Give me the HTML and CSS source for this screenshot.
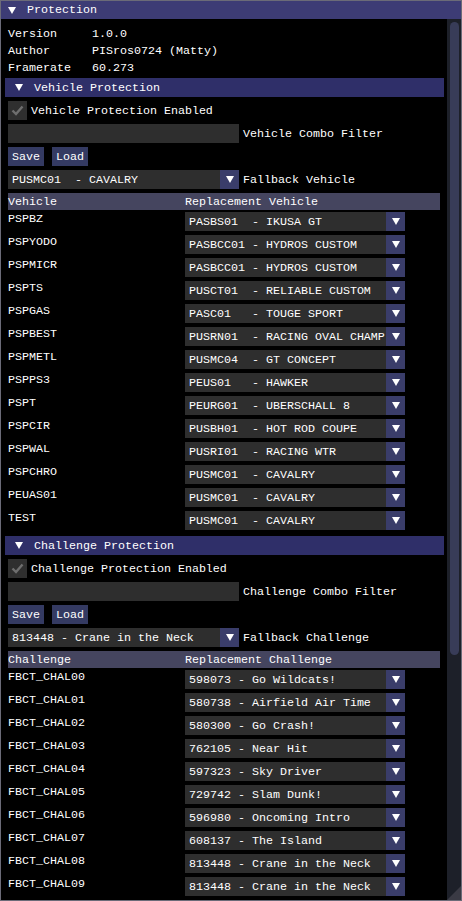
FILE: index.html
```html
<!DOCTYPE html>
<html>
<head>
<meta charset="utf-8">
<link rel="stylesheet" href="styles.css">
</head>
<body>
<div class="window">
  <div class="titlebar"><span class="tri"></span><span class="title">Protection</span></div>
  <div class="body">
    <div class="content">
      <div class="info"><span>Version</span><span>1.0.0</span></div>
      <div class="info"><span>Author</span><span>PISros0724 (Matty)</span></div>
      <div class="info"><span>Framerate</span><span>60.273</span></div>

      <div class="header"><span class="tri"></span><span>Vehicle Protection</span></div>
      <div class="check-row"><span class="checkbox"><svg width="13" height="11" viewBox="0 0 13 11"><path d="M1.5 5.5 L5 9 L11.5 1.5" fill="none" stroke="#6e6e6e" stroke-width="2.4"/></svg></span><span class="text">Vehicle Protection Enabled</span></div>
      <div class="field-row"><span class="input"></span><span class="label">Vehicle Combo Filter</span></div>
      <div class="btn-row"><span class="btn">Save</span><span class="btn">Load</span></div>
      <div class="field-row"><span class="combo wide"><span class="val">PUSMC01  - CAVALRY</span><span class="arrow"><span class="down"></span></span></span><span class="label">Fallback Vehicle</span></div>
      <div class="table">
        <div class="thead"><span>Vehicle</span><span>Replacement Vehicle</span></div>
        <div class="trow"><span class="cell">PSPBZ</span><span class="combo"><span class="val">PASBS01  - IKUSA GT</span><span class="arrow"><span class="down"></span></span></span></div>
        <div class="trow"><span class="cell">PSPYODO</span><span class="combo"><span class="val">PASBCC01 - HYDROS CUSTOM</span><span class="arrow"><span class="down"></span></span></span></div>
        <div class="trow"><span class="cell">PSPMICR</span><span class="combo"><span class="val">PASBCC01 - HYDROS CUSTOM</span><span class="arrow"><span class="down"></span></span></span></div>
        <div class="trow"><span class="cell">PSPTS</span><span class="combo"><span class="val">PUSCT01  - RELIABLE CUSTOM</span><span class="arrow"><span class="down"></span></span></span></div>
        <div class="trow"><span class="cell">PSPGAS</span><span class="combo"><span class="val">PASC01   - TOUGE SPORT</span><span class="arrow"><span class="down"></span></span></span></div>
        <div class="trow"><span class="cell">PSPBEST</span><span class="combo"><span class="val">PUSRN01  - RACING OVAL CHAMP</span><span class="arrow"><span class="down"></span></span></span></div>
        <div class="trow"><span class="cell">PSPMETL</span><span class="combo"><span class="val">PUSMC04  - GT CONCEPT</span><span class="arrow"><span class="down"></span></span></span></div>
        <div class="trow"><span class="cell">PSPPS3</span><span class="combo"><span class="val">PEUS01   - HAWKER</span><span class="arrow"><span class="down"></span></span></span></div>
        <div class="trow"><span class="cell">PSPT</span><span class="combo"><span class="val">PEURG01  - UBERSCHALL 8</span><span class="arrow"><span class="down"></span></span></span></div>
        <div class="trow"><span class="cell">PSPCIR</span><span class="combo"><span class="val">PUSBH01  - HOT ROD COUPE</span><span class="arrow"><span class="down"></span></span></span></div>
        <div class="trow"><span class="cell">PSPWAL</span><span class="combo"><span class="val">PUSRI01  - RACING WTR</span><span class="arrow"><span class="down"></span></span></span></div>
        <div class="trow"><span class="cell">PSPCHRO</span><span class="combo"><span class="val">PUSMC01  - CAVALRY</span><span class="arrow"><span class="down"></span></span></span></div>
        <div class="trow"><span class="cell">PEUAS01</span><span class="combo"><span class="val">PUSMC01  - CAVALRY</span><span class="arrow"><span class="down"></span></span></span></div>
        <div class="trow"><span class="cell">TEST</span><span class="combo"><span class="val">PUSMC01  - CAVALRY</span><span class="arrow"><span class="down"></span></span></span></div>
      </div>

      <div class="header"><span class="tri"></span><span>Challenge Protection</span></div>
      <div class="check-row"><span class="checkbox"><svg width="13" height="11" viewBox="0 0 13 11"><path d="M1.5 5.5 L5 9 L11.5 1.5" fill="none" stroke="#6e6e6e" stroke-width="2.4"/></svg></span><span class="text">Challenge Protection Enabled</span></div>
      <div class="field-row"><span class="input"></span><span class="label">Challenge Combo Filter</span></div>
      <div class="btn-row"><span class="btn">Save</span><span class="btn">Load</span></div>
      <div class="field-row"><span class="combo wide"><span class="val">813448 - Crane in the Neck</span><span class="arrow"><span class="down"></span></span></span><span class="label">Fallback Challenge</span></div>
      <div class="table">
        <div class="thead"><span>Challenge</span><span>Replacement Challenge</span></div>
        <div class="trow"><span class="cell">FBCT_CHAL00</span><span class="combo"><span class="val">598073 - Go Wildcats!</span><span class="arrow"><span class="down"></span></span></span></div>
        <div class="trow"><span class="cell">FBCT_CHAL01</span><span class="combo"><span class="val">580738 - Airfield Air Time</span><span class="arrow"><span class="down"></span></span></span></div>
        <div class="trow"><span class="cell">FBCT_CHAL02</span><span class="combo"><span class="val">580300 - Go Crash!</span><span class="arrow"><span class="down"></span></span></span></div>
        <div class="trow"><span class="cell">FBCT_CHAL03</span><span class="combo"><span class="val">762105 - Near Hit</span><span class="arrow"><span class="down"></span></span></span></div>
        <div class="trow"><span class="cell">FBCT_CHAL04</span><span class="combo"><span class="val">597323 - Sky Driver</span><span class="arrow"><span class="down"></span></span></span></div>
        <div class="trow"><span class="cell">FBCT_CHAL05</span><span class="combo"><span class="val">729742 - Slam Dunk!</span><span class="arrow"><span class="down"></span></span></span></div>
        <div class="trow"><span class="cell">FBCT_CHAL06</span><span class="combo"><span class="val">596980 - Oncoming Intro</span><span class="arrow"><span class="down"></span></span></span></div>
        <div class="trow"><span class="cell">FBCT_CHAL07</span><span class="combo"><span class="val">608137 - The Island</span><span class="arrow"><span class="down"></span></span></span></div>
        <div class="trow"><span class="cell">FBCT_CHAL08</span><span class="combo"><span class="val">813448 - Crane in the Neck</span><span class="arrow"><span class="down"></span></span></span></div>
        <div class="trow"><span class="cell">FBCT_CHAL09</span><span class="combo"><span class="val">813448 - Crane in the Neck</span><span class="arrow"><span class="down"></span></span></span></div>
      </div>
    </div>
    <div class="scrollbar"><div class="grab"></div></div>
    <div class="grip"></div>
  </div>
</div>
</body>
</html>
```
FILE: styles.css
```css
* { box-sizing: border-box; }
html, body { margin: 0; padding: 0; background: #000; }
body {
  font-family: "Liberation Mono", "DejaVu Sans Mono", monospace;
  font-size: 11.67px;
  line-height: 13px;
  color: #ffffff;
}
.window {
  width: 462px;
  height: 901px;
  border: 1px solid #6b6b78;
  background: #000;
  overflow: hidden;
  display: flex;
  flex-direction: column;
}
.titlebar {
  height: 18px;
  flex: none;
  background: #3d3c75;
  display: flex;
  align-items: flex-start;
  padding: 3px 0 0 7px;
}
.tri {
  width: 0; height: 0;
  border-left: 4px solid transparent;
  border-right: 4px solid transparent;
  border-top: 7px solid #fff;
  margin-top: 3px;
}
.titlebar .title { margin-left: 11px; }
.body {
  flex: 1;
  display: flex;
  position: relative;
  min-height: 0;
}
.content {
  flex: 1;
  padding: 8px 7px 0 7px;
  display: flex;
  flex-direction: column;
  gap: 4px;
  overflow: hidden;
  white-space: pre;
}
.info {
  display: grid;
  grid-template-columns: 84px 1fr;
  height: 13px;
  flex: none;
  padding-top: 1px;
}
.header {
  height: 19px;
  flex: none;
  margin: 0 -4px 0 -3px;
  background: #2f2f69;
  display: flex;
  align-items: flex-start;
  padding: 4px 0 0 10px;
}
.header .tri { margin-top: 2px; margin-right: 11px; }
.check-row { display: flex; gap: 4px; height: 19px; flex: none; }
.checkbox {
  width: 19px; height: 19px;
  background: #2f2f2f;
  display: flex; align-items: center; justify-content: center;
}
.check-row .text { padding-top: 4px; }
.field-row { display: flex; gap: 4px; height: 19px; flex: none; }
.input { width: 231px; height: 19px; background: #2e2e2e; }
.field-row .label { padding-top: 4px; }
.btn-row { display: flex; gap: 8px; height: 19px; flex: none; }
.btn {
  height: 19px;
  padding: 4px 4px 0 4px;
  background: #343a62;
}
.combo {
  display: flex;
  height: 19px;
  background: #2e2e2e;
  width: 220px;
}
.combo.wide { width: 231px; }
.combo .val {
  flex: 1;
  overflow: hidden;
  padding: 4px 0 0 4px;
}
.arrow {
  width: 19px; height: 19px;
  flex: none;
  background: #3a3d6a;
  display: flex; align-items: center; justify-content: center;
}
.down {
  width: 0; height: 0;
  border-left: 4px solid transparent;
  border-right: 4px solid transparent;
  border-top: 7px solid #fff;
}
.table {
  display: flex;
  flex-direction: column;
  flex: none;
}
.thead {
  height: 17px;
  background: #45455f;
  display: grid;
  grid-template-columns: 177px 1fr;
  padding-top: 3px;
}
.trow {
  height: 23px;
  display: grid;
  grid-template-columns: 177px 1fr;
  align-items: start;
}
.trow .cell { padding-top: 3px; }
.trow .combo { margin-top: 2px; }
.scrollbar {
  width: 14px;
  flex: none;
  background: #1d2029;
  padding: 3px 2px 0 3px;
}
.grab {
  width: 9px;
  height: 633px;
  border-radius: 5px;
  background: #383c58;
}
.grip {
  position: absolute;
  right: 0; bottom: 0;
  width: 0; height: 0;
  border-left: 14px solid transparent;
  border-bottom: 14px solid #3a3a44;
}
```
